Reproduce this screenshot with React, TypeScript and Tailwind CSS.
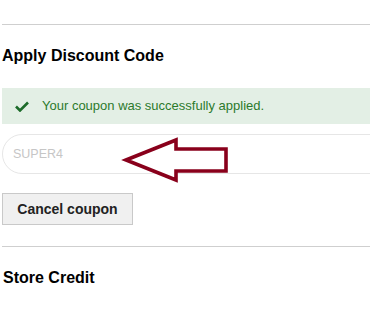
import React from "react";

function Check() {
  return (
    <svg width="14" height="11" viewBox="0 0 14 11" className="shrink-0">
      <path d="M1 5.5 L5 9.5 L13 1.5" fill="none" stroke="#1d6b2a" strokeWidth="2.6" />
    </svg>
  );
}

function Arrow() {
  return (
    <svg
      width="112"
      height="48"
      viewBox="0 0 112 48"
      className="absolute left-[120px] top-[136px] pointer-events-none"
    >
      <polygon
        points="6,24 56,4 56,13 106,13 106,35 56,35 56,44"
        fill="white"
        stroke="#89001b"
        strokeWidth="3.6"
        strokeLinejoin="miter"
      />
    </svg>
  );
}

export default function App() {
  return (
    <div className="relative w-[370px] h-[335px] bg-white overflow-hidden pl-[2px] pt-[24px] font-['Liberation_Sans',Arial,sans-serif]">
      <div className="h-px bg-[#cfcfcf]" />
      <h2 className="mt-[21px] text-[16px] leading-[20px] font-bold text-black">Apply Discount Code</h2>

      <div className="mt-[22px] h-[36px] bg-[#e3efe5] flex items-center gap-[13px] pl-[13px]">
        <Check />
        <span className="text-[13px] text-[#2c7a2c]">Your coupon was successfully applied.</span>
      </div>

      <input
        placeholder="SUPER4"
        readOnly
        className="mt-[10px] block w-[400px] h-[40px] rounded-full border border-[#e6e6e6] pl-[10px] text-[12.5px] placeholder:text-[#c6c6c6] outline-none"
      />

      <button className="mt-[19px] block w-[131px] h-[32px] bg-[#f0f0f0] border border-[#c9c9c9] text-[14px] font-bold text-[#222]">
        Cancel coupon
      </button>

      <div className="mt-[21px] h-px bg-[#cfcfcf]" />
      <h2 className="mt-[21px] text-[16px] leading-[20px] font-bold text-black pl-px">Store Credit</h2>

      <Arrow />
    </div>
  );
}
